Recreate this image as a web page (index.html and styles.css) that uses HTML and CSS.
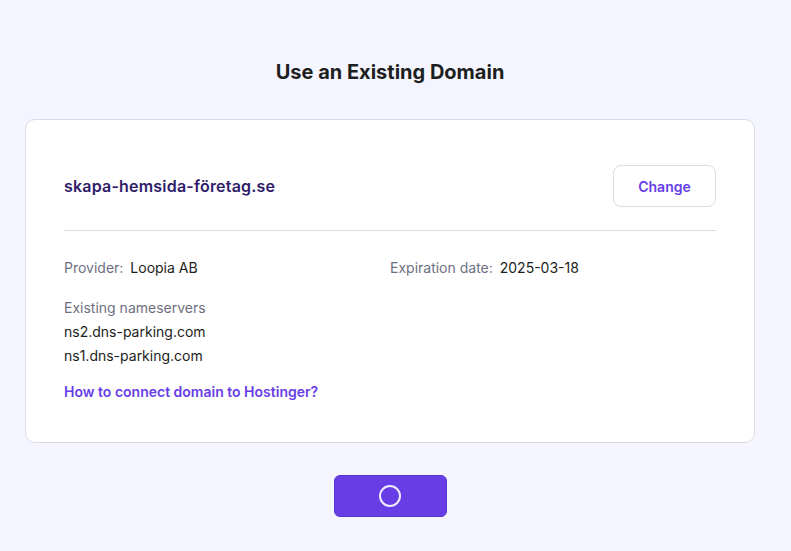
FILE: index.html
```html
<!DOCTYPE html>
<html lang="en">
<head>
  <meta charset="UTF-8">
  <title>Use an Existing Domain</title>
  <link rel="stylesheet" href="styles.css">
</head>
<body>
  <div class="page">
    <h1 class="title">Use an Existing Domain</h1>

    <div class="card">
      <div class="domain-row">
        <span class="domain">skapa-hemsida-företag.se</span>
        <button class="change-button">Change</button>
      </div>
      <div class="divider"></div>

      <div class="details">
        <div class="detail"><span class="label">Provider:</span> <span class="value">Loopia AB</span></div>
        <div class="detail"><span class="label">Expiration date:</span> <span class="value">2025-03-18</span></div>
      </div>

      <div class="nameservers">
        <div class="label">Existing nameservers</div>
        <div class="value">ns2.dns-parking.com</div>
        <div class="value">ns1.dns-parking.com</div>
      </div>

      <a class="help-link" href="#">How to connect domain to Hostinger?</a>
    </div>

    <div class="footer">
      <button class="primary-button">
        <span class="spinner"></span>
      </button>
    </div>
  </div>
</body>
</html>
```

FILE: styles.css
```css
/* General reset */
* {
  margin: 0;
  padding: 0;
  box-sizing: border-box;
}

body {
  background-color: #f4f5ff;
  font-family: Inter, "Noto Sans", sans-serif;
  color: #1d1e20;
}

.page {
  padding: 60px 36px 0 25px;
}

.title {
  font-size: 20px;
  font-weight: 700;
  line-height: 24px;
  text-align: center;
  margin-bottom: 35px;
}

/* Card */
.card {
  background-color: #fff;
  border: 1px solid #dadce2;
  border-radius: 10px;
  padding: 45px 38px 38px;
}

.domain-row {
  display: flex;
  align-items: center;
  justify-content: space-between;
}

.domain {
  font-size: 16px;
  font-weight: 600;
  letter-spacing: 0.2px;
  color: #2f1c6a;
}

.change-button {
  width: 103px;
  height: 42px;
  background: #fff;
  border: 1px solid #dadce2;
  border-radius: 8px;
  font-family: inherit;
  font-size: 14px;
  font-weight: 600;
  color: #673de6;
  cursor: pointer;
}

.divider {
  height: 1px;
  background-color: #dadce2;
  margin-top: 23px;
}

.details {
  display: grid;
  grid-template-columns: 1fr 1fr;
  margin-top: 25px;
  font-size: 14px;
  line-height: 24px;
}

.label {
  color: #6d7081;
}

.details .label {
  margin-right: 3px;
}

.nameservers {
  margin-top: 16px;
  font-size: 14px;
  line-height: 24px;
}

.help-link {
  display: block;
  margin-top: 12px;
  font-size: 14px;
  line-height: 24px;
  font-weight: 600;
  color: #673de6;
  text-decoration: none;
}

/* Footer */
.footer {
  display: flex;
  justify-content: center;
  margin-top: 32px;
}

.primary-button {
  display: flex;
  align-items: center;
  justify-content: center;
  width: 113px;
  height: 42px;
  background-color: #673de6;
  border: 1px solid #5a35c9;
  border-radius: 6px;
  cursor: pointer;
}

.spinner {
  width: 22px;
  height: 22px;
  border: 2px solid #fff;
  border-radius: 50%;
  opacity: 0.9;
}
```
